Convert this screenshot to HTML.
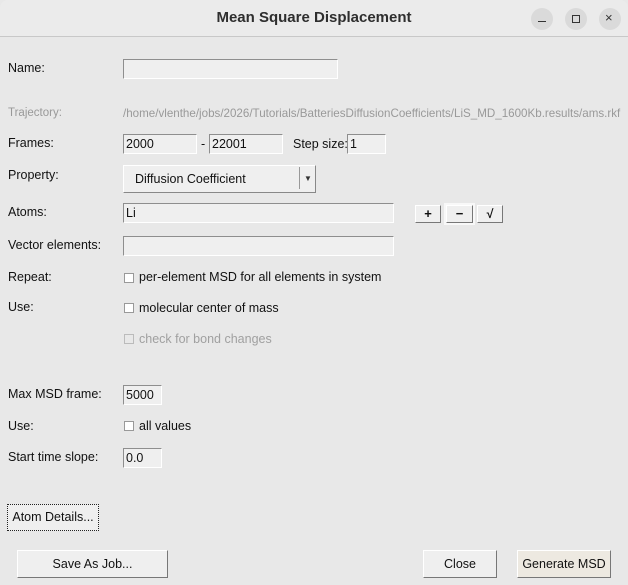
<!DOCTYPE html>
<html><head><style>
*{margin:0;padding:0;box-sizing:border-box}
body{width:628px;height:585px;background:#e8e8e8;font-family:"Liberation Sans",sans-serif;font-size:12.5px;color:#111;position:relative;overflow:hidden}
.a{position:absolute;white-space:nowrap}
.tb{position:absolute;left:0;top:0;width:628px;height:37px;background:#ebebeb;border-bottom:1px solid #c8c8c8;border-radius:8px 8px 0 0}
.tt{position:absolute;left:0;width:628px;top:9px;text-align:center;font-weight:bold;font-size:15px;color:#2e2e2e}
.wb{position:absolute;top:8px;width:22px;height:22px;border-radius:50%;background:#dadada}
.in{position:absolute;background:#efefef;border:1px solid;border-color:#8e8e8e #fff #fff #8e8e8e;height:20px;padding:2px 2px;font-size:12.5px}
.lb{position:absolute;left:8px}
.cb{position:absolute;width:10px;height:10px;background:#fff;border:1px solid #999}
.bt{position:absolute;background:#efefef;border:1px solid;border-color:#fff #777 #777 #fff;text-align:center;font-size:12.5px}
</style></head><body>
<div class="tb"></div>
<div class="tt">Mean Square Displacement</div>
<div class="wb" style="left:531px"><div class="a" style="left:7px;top:13px;width:8px;height:1px;background:#333"></div></div>
<div class="wb" style="left:565px"><div class="a" style="left:7px;top:7px;width:8px;height:8px;border:1px solid #333"></div></div>
<div class="wb" style="left:599px"><div class="a" style="left:6px;top:2px;font-size:13px;color:#333">×</div></div>

<div class="lb" style="top:61px">Name:</div>
<div class="in" style="left:123px;top:59px;width:215px"></div>

<div class="lb" style="top:107px;color:#999;font-size:11.5px">Trajectory:</div>
<div class="a" style="left:123px;top:107px;color:#999;font-size:11.6px">/home/vlenthe/jobs/2026/Tutorials/BatteriesDiffusionCoefficients/LiS_MD_1600Kb.results/ams.rkf</div>

<div class="lb" style="top:136px">Frames:</div>
<div class="in" style="left:123px;top:134px;width:74px">2000</div>
<div class="a" style="left:201px;top:137px">-</div>
<div class="in" style="left:209px;top:134px;width:74px">22001</div>
<div class="a" style="left:293px;top:137px">Step size:</div>
<div class="in" style="left:347px;top:134px;width:39px">1</div>

<div class="lb" style="top:168px">Property:</div>
<div class="bt" style="left:123px;top:165px;width:193px;height:28px;border-color:#fff #888 #888 #fff"></div>
<div class="a" style="left:135px;top:172px">Diffusion Coefficient</div>
<div class="a" style="left:299px;top:167px;width:1px;height:22px;background:#999"></div>
<div class="a" style="left:304px;top:174px;font-size:8px;color:#333">▼</div>

<div class="lb" style="top:205px">Atoms:</div>
<div class="in" style="left:123px;top:203px;width:271px">Li</div>
<div class="bt" style="left:415px;top:205px;width:26px;height:18px;font-weight:bold;line-height:16px;font-size:13px">+</div>
<div class="a" style="left:444px;top:203px;width:31px;height:22px;background:#f8f8f8"></div>
<div class="bt" style="left:446px;top:205px;width:27px;height:18px;font-weight:bold;line-height:15px;font-size:13px">−</div>
<div class="bt" style="left:477px;top:205px;width:26px;height:18px;font-weight:bold;line-height:16px">√</div>

<div class="lb" style="top:238px">Vector elements:</div>
<div class="in" style="left:123px;top:236px;width:271px"></div>

<div class="lb" style="top:270px">Repeat:</div>
<div class="cb" style="left:124px;top:273px"></div>
<div class="a" style="left:139px;top:270px">per-element MSD for all elements in system</div>

<div class="lb" style="top:300px">Use:</div>
<div class="cb" style="left:124px;top:303px"></div>
<div class="a" style="left:139px;top:301px">molecular center of mass</div>

<div class="cb" style="left:124px;top:334px;background:#e8e8e8;border-color:#bbb"></div>
<div class="a" style="left:139px;top:332px;color:#a0a0a0">check for bond changes</div>

<div class="lb" style="top:387px">Max MSD frame:</div>
<div class="in" style="left:123px;top:385px;width:39px">5000</div>

<div class="lb" style="top:419px">Use:</div>
<div class="cb" style="left:124px;top:421px"></div>
<div class="a" style="left:139px;top:419px">all values</div>

<div class="lb" style="top:450px">Start time slope:</div>
<div class="in" style="left:123px;top:448px;width:39px">0.0</div>

<div class="bt" style="left:7px;top:504px;width:92px;height:27px;border:1px dotted #222;line-height:25px">Atom Details...</div>

<div class="bt" style="left:17px;top:550px;width:151px;height:28px;line-height:26px">Save As Job...</div>
<div class="bt" style="left:423px;top:550px;width:74px;height:28px;line-height:26px">Close</div>
<div class="bt" style="left:517px;top:550px;width:94px;height:28px;line-height:26px;background:#ede9e1">Generate MSD</div>
</body></html>
